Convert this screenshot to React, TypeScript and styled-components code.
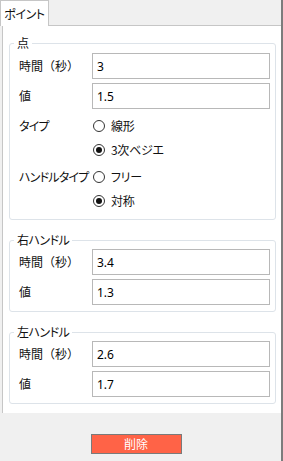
import React from "react";
import styled, { createGlobalStyle } from "styled-components";

const GlobalStyle = createGlobalStyle`
  html, body {
    margin: 0;
    padding: 0;
    background: #f0f0f0;
  }
  * {
    box-sizing: border-box;
  }
`;

const Frame = styled.div`
  width: 283px;
  height: 461px;
  display: flex;
  flex-direction: column;
  background: #f0f0f0;
  border-right: 2px solid #7c7c7c;
  font-family: "Noto Sans CJK JP", "Noto Sans", sans-serif;
  font-size: 12px;
  color: #111;
`;

const TabStrip = styled.div`
  display: flex;
  height: 26px;
  flex: none;
`;

const Tab = styled.div<{ $active?: boolean }>`
  width: 49px;
  height: 26px;
  display: flex;
  align-items: center;
  justify-content: center;
  background: ${(p) => (p.$active ? "#fff" : "#f0f0f0")};
  border: 1px solid #c6c6c6;
  border-bottom: none;
  position: relative;
  z-index: 1;
  line-height: 14px;
  white-space: nowrap;
  font-feature-settings: "palt";
  letter-spacing: -0.4px;
`;

const TabFill = styled.div`
  flex: 1;
  border-bottom: 1px solid #c6c6c6;
`;

const Panel = styled.div`
  flex: none;
  margin-left: 2px;
  background: #fff;
  border-left: 1px solid #c6c6c6;
  padding: 0 5px 9px 6px;
`;

const Group = styled.fieldset<{ $first?: boolean }>`
  margin: ${(p) => (p.$first ? "10px" : "13px")} 0 0 0;
  padding: ${(p) => (p.$first ? "3px" : "2px")} 5px 6px 8px;
  border: 1px solid #dde3e9;
  border-radius: 3px;
  min-inline-size: 0;
  display: flex;
  flex-direction: column;
  gap: 4px;
`;

const Legend = styled.legend`
  font-size: 12px;
  line-height: 14px;
  padding: 0 3px;
  margin-left: -4px;
  font-feature-settings: "palt";
  letter-spacing: -0.5px;
`;

const FieldRow = styled.div`
  display: grid;
  grid-template-columns: 74px 1fr;
  align-items: center;
  height: 26px;
`;

const Label = styled.span<{ $palt?: boolean }>`
  line-height: 14px;
  white-space: nowrap;
  padding-left: 1px;
  font-feature-settings: ${(p) => (p.$palt ? '"palt"' : "normal")};
  letter-spacing: ${(p) => (p.$palt ? "-0.8px" : "0")};
`;

const TextBox = styled.input`
  width: 100%;
  height: 26px;
  border: 1px solid #b8b8b8;
  padding: 0 4px;
  font-family: "Noto Sans", "Noto Sans CJK JP", sans-serif;
  font-size: 12px;
  color: #000;
  background: #fff;
  outline: none;
`;

const RadioRow = styled.div<{ $gap: number }>`
  display: grid;
  grid-template-columns: 74px 1fr;
  margin-top: ${(p) => p.$gap}px;
`;

const RowLabel = styled(Label)`
  height: 24px;
  display: flex;
  align-items: center;
`;

const Options = styled.div`
  display: flex;
  flex-direction: column;
`;

const Option = styled.label`
  height: 24px;
  display: flex;
  align-items: center;
  gap: 6px;
  line-height: 14px;
  font-feature-settings: "palt";
  letter-spacing: -0.3px;
`;

const RadioDot = styled.span<{ $checked?: boolean }>`
  width: 12px;
  height: 12px;
  margin-left: 1px;
  border-radius: 50%;
  border: 1px solid #333;
  background: #fff;
  display: flex;
  align-items: center;
  justify-content: center;
  &::after {
    content: "";
    width: 6px;
    height: 6px;
    border-radius: 50%;
    background: ${(p) => (p.$checked ? "#111" : "transparent")};
  }
`;

const Footer = styled.div`
  flex: 1;
  display: flex;
  justify-content: center;
  align-items: flex-start;
  padding: 21px 9px 0 0;
`;

const DeleteButton = styled.button`
  width: 91px;
  height: 20px;
  background: #ff6347;
  border: 1px solid #7a7a7a;
  color: #fff;
  font-family: "Noto Sans CJK JP", sans-serif;
  font-size: 12px;
  line-height: 14px;
  padding: 0;
`;

type Field = { label: string; value: string };

const Fields: React.FC<{ fields: Field[] }> = ({ fields }) => (
  <>
    {fields.map((f) => (
      <FieldRow key={f.label}>
        <Label>{f.label}</Label>
        <TextBox defaultValue={f.value} />
      </FieldRow>
    ))}
  </>
);

const RadioChoice: React.FC<{
  label: string;
  options: string[];
  selected: number;
  gap: number;
}> = ({ label, options, selected, gap }) => (
  <RadioRow $gap={gap}>
    <RowLabel $palt>{label}</RowLabel>
    <Options>
      {options.map((o, i) => (
        <Option key={o}>
          <RadioDot $checked={i === selected} />
          {o}
        </Option>
      ))}
    </Options>
  </RadioRow>
);

const App: React.FC = () => {
  return (
    <Frame>
      <GlobalStyle />
      <TabStrip>
        <Tab $active>ポイント</Tab>
        <TabFill />
      </TabStrip>
      <Panel>
        <Group $first>
          <Legend>点</Legend>
          <Fields
            fields={[
              { label: "時間（秒）", value: "3" },
              { label: "値", value: "1.5" },
            ]}
          />
          <RadioChoice label="タイプ" options={["線形", "3次ベジエ"]} selected={1} gap={1} />
          <RadioChoice label="ハンドルタイプ" options={["フリー", "対称"]} selected={1} gap={-1} />
        </Group>
        <Group>
          <Legend>右ハンドル</Legend>
          <Fields
            fields={[
              { label: "時間（秒）", value: "3.4" },
              { label: "値", value: "1.3" },
            ]}
          />
        </Group>
        <Group>
          <Legend>左ハンドル</Legend>
          <Fields
            fields={[
              { label: "時間（秒）", value: "2.6" },
              { label: "値", value: "1.7" },
            ]}
          />
        </Group>
      </Panel>
      <Footer>
        <DeleteButton>削除</DeleteButton>
      </Footer>
    </Frame>
  );
};

export default App;
